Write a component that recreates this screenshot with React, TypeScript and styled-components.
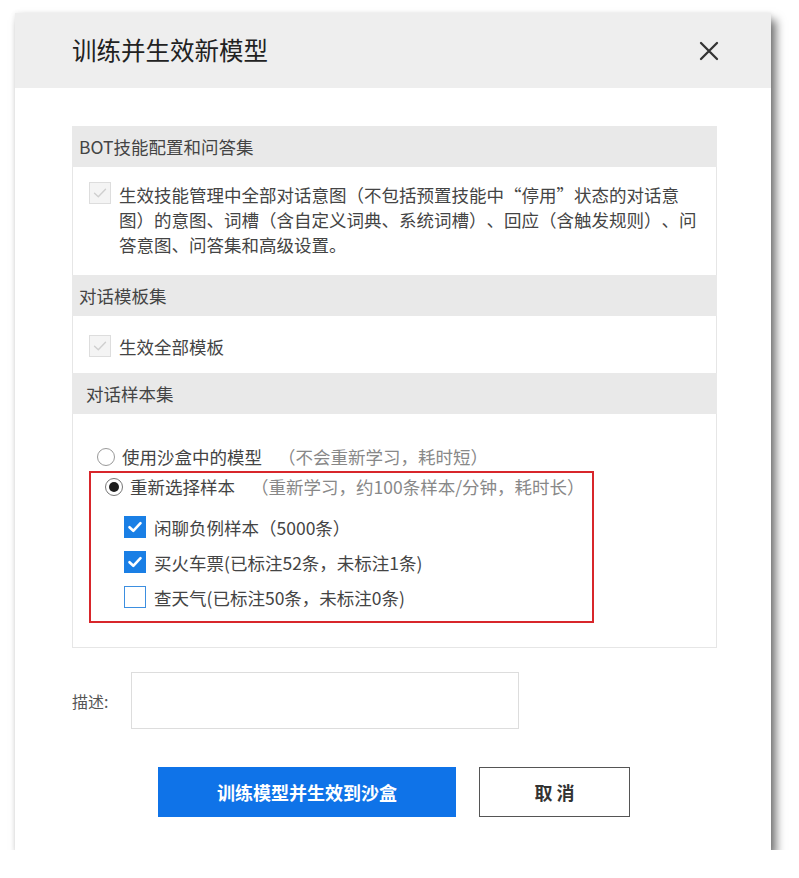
import React from 'react';

import styled, { createGlobalStyle } from 'styled-components';

const GlobalStyle = createGlobalStyle`
  body {
    margin: 0;
    background: #ffffff;
    font-family: "Noto Sans CJK SC", "Liberation Sans", sans-serif;
    text-spacing-trim: space-all;
  }
`;

type CheckState = 'disabled' | 'checked' | 'unchecked';

const CheckIcon = ({ color, width }: { color: string; width: number }) => (
  <svg width="16" height="16" viewBox="0 0 16 16">
    <path d="M2.5 8.2 L6.3 11.8 L13.5 4.2" fill="none" stroke={color} strokeWidth={width} strokeLinecap="round" strokeLinejoin="round" />
  </svg>
);

const Checkbox = ({ state }: { state: CheckState }) => (
  <CheckboxBox $state={state}>
    {state === 'disabled' && <CheckIcon color="#cfcfcf" width={1.4} />}
    {state === 'checked' && <CheckIcon color="#ffffff" width={2.6} />}
  </CheckboxBox>
);

const samples: { label: string; checked: boolean }[] = [
  { label: '闲聊负例样本（5000条）', checked: true },
  { label: '买火车票(已标注52条，未标注1条)', checked: true },
  { label: '查天气(已标注50条，未标注0条)', checked: false },
];

export default function App() {
  return (
    <Page>
      <GlobalStyle />
      <Dialog>
        <Header>
          <Title>训练并生效新模型</Title>
          <CloseButton aria-label="关闭">
            <svg width="20" height="20" viewBox="0 0 20 20">
              <path d="M2 2 L18 18 M18 2 L2 18" stroke="#333" strokeWidth="2.3" strokeLinecap="round" />
            </svg>
          </CloseButton>
        </Header>

        <Body>
          <Panel>
            <SectionHeader>BOT技能配置和问答集</SectionHeader>
            <SectionBody $height={108}>
              <CheckRow $top>
                <Checkbox state="disabled" />
                <CheckText>
                  生效技能管理中全部对话意图（不包括预置技能中“停用”状态的对话意图）的意图、词槽（含自定义词典、系统词槽）、回应（含触发规则）、问答意图、问答集和高级设置。
                </CheckText>
              </CheckRow>
            </SectionBody>

            <SectionHeader>对话模板集</SectionHeader>
            <SectionBody $height={57}>
              <CheckRow>
                <Checkbox state="disabled" />
                <CheckText>生效全部模板</CheckText>
              </CheckRow>
            </SectionBody>

            <SectionHeader $indent={14}>对话样本集</SectionHeader>
            <SampleBody>
              <RadioRow>
                <Radio $checked={false} />
                <RadioLabel>使用沙盒中的模型</RadioLabel>
                <Hint>（不会重新学习，耗时短）</Hint>
              </RadioRow>
              <Highlight>
                <RadioRow>
                  <Radio $checked />
                  <RadioLabel>重新选择样本</RadioLabel>
                  <Hint>（重新学习，约100条样本/分钟，耗时长）</Hint>
                </RadioRow>
                <SampleList>
                  {samples.map((s) => (
                    <SampleRow key={s.label}>
                      <Checkbox state={s.checked ? 'checked' : 'unchecked'} />
                      <CheckText>{s.label}</CheckText>
                    </SampleRow>
                  ))}
                </SampleList>
              </Highlight>
            </SampleBody>
          </Panel>

          <DescRow>
            <DescLabel>描述:</DescLabel>
            <DescInput />
          </DescRow>

          <Actions>
            <PrimaryButton>训练模型并生效到沙盒</PrimaryButton>
            <CancelButton>取 消</CancelButton>
          </Actions>
        </Body>
      </Dialog>
    </Page>
  );
}

const Page = styled.div`
  padding: 13px 0 0 15px;
`;

const Dialog = styled.div`
  width: 756px;
  height: 837px;
  background: #ffffff;
  display: flex;
  flex-direction: column;
  box-shadow: 5px 7px 9px rgba(0, 0, 0, 0.55), 0 0 5px rgba(0, 0, 0, 0.08);
`;

const Header = styled.div`
  height: 75px;
  flex-shrink: 0;
  background: #eeeeee;
  display: flex;
  align-items: center;
  justify-content: space-between;
  padding: 0 52px 0 57px;
`;

const Title = styled.h1`
  margin: 0;
  font-size: 24.5px;
  font-weight: 400;
  color: #222;
  line-height: 1;
`;

const CloseButton = styled.button`
  border: none;
  background: none;
  padding: 0;
  width: 20px;
  height: 20px;
  display: flex;
  cursor: pointer;
`;

const Body = styled.div`
  padding: 38px 54px 0 57px;
  display: flex;
  flex-direction: column;
`;

const Panel = styled.div`
  border: 1px solid #e6e6e6;
  border-top: none;
  display: flex;
  flex-direction: column;
`;

const SectionHeader = styled.div<{ $indent?: number }>`
  height: 41px;
  background: #e9e9e9;
  margin: 0 -1px;
  padding-left: ${({ $indent }) => $indent ?? 7}px;
  display: flex;
  align-items: center;
  font-size: 17.5px;
  color: #444;
`;

const SectionBody = styled.div<{ $height: number }>`
  height: ${({ $height }) => $height}px;
  padding: 0 15px 0 16px;
  display: flex;
  flex-direction: column;
  justify-content: center;
`;

const CheckRow = styled.div<{ $top?: boolean }>`
  display: flex;
  align-items: ${({ $top }) => ($top ? 'flex-start' : 'center')};
  gap: 8px;
  margin-top: ${({ $top }) => ($top ? '-4px' : '3px')};
`;

const CheckboxBox = styled.span<{ $state: CheckState }>`
  flex-shrink: 0;
  width: 22px;
  height: 22px;
  box-sizing: border-box;
  display: flex;
  align-items: center;
  justify-content: center;
  border: 1px solid
    ${({ $state }) => ($state === 'disabled' ? '#dddddd' : $state === 'checked' ? '#1a7fe5' : '#3d8fe0')};
  background: ${({ $state }) => ($state === 'disabled' ? '#f4f4f4' : $state === 'checked' ? '#1a7fe5' : '#ffffff')};
`;

const CheckText = styled.span`
  font-size: 17.5px;
  line-height: 25px;
  color: #444;
`;

const SampleBody = styled.div`
  padding: 30px 0 24px 16px;
  display: flex;
  flex-direction: column;
  width: 505px;
`;

const RadioRow = styled.div`
  display: flex;
  align-items: center;
  height: 25px;
  padding-left: 8px;
`;

const Radio = styled.span<{ $checked: boolean }>`
  width: 18px;
  height: 18px;
  box-sizing: border-box;
  border-radius: 50%;
  border: 1px solid ${({ $checked }) => ($checked ? '#777' : '#999')};
  background: #fff;
  display: flex;
  align-items: center;
  justify-content: center;
  margin-right: 7px;

  &::after {
    content: '';
    display: ${({ $checked }) => ($checked ? 'block' : 'none')};
    width: 10px;
    height: 10px;
    border-radius: 50%;
    background: #1e1e1e;
  }
`;

const RadioLabel = styled.span`
  font-size: 17.5px;
  color: #444;
`;

const Hint = styled.span`
  font-size: 17.5px;
  color: #888;
  margin-left: 16px;
`;

const Highlight = styled.div`
  margin-top: 2px;
  border: 2px solid #d8262b;
  padding: 1px 0 13px 6px;
  display: flex;
  flex-direction: column;
`;

const SampleList = styled.div`
  display: flex;
  flex-direction: column;
  gap: 13px;
  padding: 17px 0 0 27px;
`;

const SampleRow = styled.div`
  display: flex;
  align-items: center;
  gap: 8px;
  height: 22px;
`;

const DescRow = styled.div`
  margin-top: 24px;
  display: flex;
  align-items: center;
  gap: 21px;
`;

const DescLabel = styled.span`
  font-size: 16px;
  color: #555;
  width: 38px;
`;

const DescInput = styled.div`
  width: 388px;
  height: 57px;
  box-sizing: border-box;
  border: 1px solid #dddddd;
`;

const Actions = styled.div`
  margin-top: 38px;
  padding-left: 86px;
  display: flex;
  gap: 23px;
`;

const PrimaryButton = styled.button`
  width: 298px;
  height: 50px;
  border: none;
  background: #0f73e8;
  color: #ffffff;
  font-family: inherit;
  font-size: 18px;
  font-weight: 700;
  cursor: pointer;
`;

const CancelButton = styled.button`
  width: 151px;
  height: 50px;
  box-sizing: border-box;
  border: 1.5px solid #555;
  background: #ffffff;
  color: #333;
  font-family: inherit;
  font-size: 18px;
  font-weight: 700;
  cursor: pointer;
`;
